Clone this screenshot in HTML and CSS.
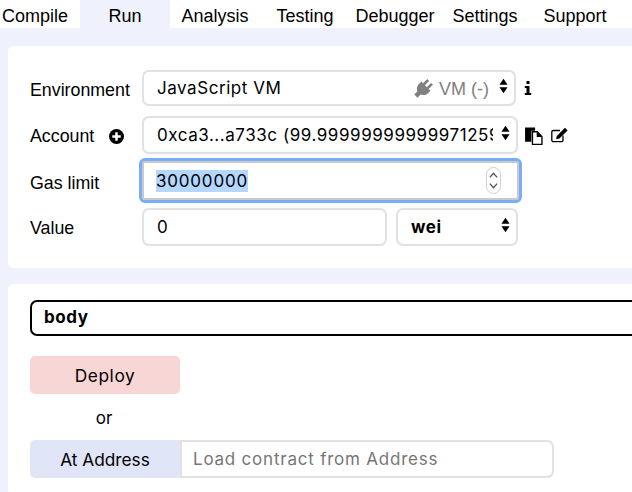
FILE: index.html
```html
<!DOCTYPE html>
<html lang="en">
  <head>
    <meta charset="UTF-8" />
    <title>Run</title>
    <link rel="stylesheet" href="styles.css">
  </head>
  <body>
    <nav class="tabs">
      <div class="tab tab-first">Compile</div>
      <div class="tab tab-active">Run</div>
      <div class="tab">Analysis</div>
      <div class="tab">Testing</div>
      <div class="tab">Debugger</div>
      <div class="tab">Settings</div>
      <div class="tab">Support</div>
    </nav>
    <main class="panel">
      <section class="card settings">
        <div class="row row-env">
          <div class="label">Environment</div>
          <div class="control select env-select">
            <span class="value">JavaScript VM</span>
            <span class="vm">
              <svg class="plug" viewBox="0 0 20 20"><g transform="rotate(45 10 10)"><path d="M6 0h2.600v6H6zM11.400 0H14v6h-2.600zM3.500 6h13v3c0 4-2.800 6-4.200 6.600V20H7.700v-4.400C6.300 15 3.500 13 3.500 9z"/></g></svg>
              VM (-)
            </span>
            <svg class="arrows" viewBox="0 0 10 16"><path d="M5 0l4.500 6.500h-9zM5 16L.5 9.500h9z"/></svg>
          </div>
          <svg class="info" viewBox="0 0 8 14"><path d="M2.500 0h3v3h-3zM.8 5h4.700v7h1.700v2H.8v-2h1.700V7H.8z"/></svg>
        </div>
        <div class="row row-account">
          <div class="label label-account">
            Account
            <svg class="plus" viewBox="0 0 16 16"><circle cx="8" cy="8" r="8"/><path d="M6.700 3.500h2.600v3.200h3.200v2.600H9.300v3.200H6.700V9.300H3.500V6.700h3.200z" fill="#fff"/></svg>
          </div>
          <div class="control select account-select">
            <span class="value value-clip">0xca3...a733c (99.99999999999971259</span>
            <svg class="arrows" viewBox="0 0 10 16"><path d="M5 0l4.500 6.500h-9zM5 16L.5 9.500h9z"/></svg>
          </div>
          <svg class="copy" viewBox="0 0 18 18"><path d="M1 1.500h9.500v3H7v10.500H1z"/><path d="M8 5.500h4.500l4.500 4.500v7.500H8z" fill="#fff" stroke="#000" stroke-width="1.300"/><path d="M12 5.500v5h5z"/></svg>
          <svg class="edit" viewBox="0 0 18 16"><path d="M12.500 8.500v4.700a1.500 1.500 0 0 1-1.500 1.500H2.800a1.500 1.500 0 0 1-1.500-1.500V5a1.500 1.500 0 0 1 1.500-1.500h6.700" fill="none" stroke="#000" stroke-width="1.300"/><path d="M14.500.8l2.600 2.600-8.200 8.200-3.300.7.700-3.300z"/></svg>
        </div>
        <div class="row row-gas">
          <div class="label">Gas limit</div>
          <div class="control gas-input">
            <span class="selected">30000000</span>
            <span class="spinner">
              <svg viewBox="0 0 10 24"><path d="M1.500 9L5 5l3.500 4M1.500 15L5 19l3.500-4" fill="none" stroke="#555" stroke-width="1.300"/></svg>
            </span>
          </div>
        </div>
        <div class="row row-value">
          <div class="label label-value">Value</div>
          <div class="control value-input"><span class="value">0</span></div>
          <div class="control select unit-select">
            <span class="value unit">wei</span>
            <svg class="arrows" viewBox="0 0 10 16"><path d="M5 0l4.500 6.500h-9zM5 16L.5 9.500h9z"/></svg>
          </div>
        </div>
      </section>
      <section class="card deploy">
        <div class="contract-select">body</div>
        <button class="btn btn-deploy">Deploy</button>
        <div class="or">or</div>
        <div class="address-row">
          <button class="btn btn-address">At Address</button>
          <div class="address-input">Load contract from Address</div>
        </div>
      </section>
    </main>
  </body>
</html>
```

FILE: styles.css
```css
/* Full-page layout */
html,
body {
  height: 100%;
  margin: 0;
  overflow: hidden;
  font-family: "Liberation Sans", Arial, sans-serif;
  font-size: 18px;
  color: #000;
  background-color: #fff;
}

/* Tabs */
.tabs {
  display: flex;
  height: 28px;
}

.tab {
  flex: 0 0 90px;
  text-align: center;
  line-height: 32px;
}

.tab-first {
  flex-basis: 70px;
  padding-right: 10px;
}

.tab-active {
  background-color: #eff1fc;
}

/* Panel with the two cards */
.panel {
  height: 464px;
  padding: 18px 0 0 8px;
  box-sizing: border-box;
  background-color: #eff1fc;
}

.card {
  background-color: #fff;
  border-radius: 5px 0 0 5px;
}

.settings {
  height: 222px;
  padding-top: 24px;
  box-sizing: border-box;
}

.deploy {
  height: 210px;
  margin-top: 16px;
  padding: 16px 0 0 22px;
  box-sizing: border-box;
}

/* Form rows */
.row {
  display: flex;
  align-items: center;
  padding-left: 22px;
}

.row-env {
  height: 36px;
}

.row-account {
  height: 38px;
  margin-top: 10px;
}

.row-gas {
  height: 39px;
  margin-top: 7px;
}

.row-value {
  height: 38px;
  margin-top: 8px;
}

.label {
  flex: 0 0 112px;
  padding-top: 5px;
  font-size: 17.8px;
}

.label-account {
  display: flex;
  align-items: center;
  padding-top: 3px;
}

.label-value {
  padding-top: 3px;
}

.plus {
  width: 15px;
  height: 15px;
  margin-left: 15px;
}

.control {
  display: flex;
  align-items: center;
  height: 100%;
  box-sizing: border-box;
  border: 2px solid #e1e1e1;
  border-radius: 7px;
  background-color: #fff;
  padding-left: 13px;
  font-family: Inter, "Liberation Sans", sans-serif;
  font-size: 17px;
  letter-spacing: 0.55px;
}

.select {
  justify-content: space-between;
  padding-right: 6px;
}

.value {
  white-space: nowrap;
}

.value-clip {
  width: 336px;
  overflow: hidden;
}

.arrows {
  flex: none;
  width: 9px;
  height: 16px;
  margin-bottom: 4px;
}

.env-select {
  width: 374px;
}

.account-select {
  width: 376px;
}

.vm {
  display: flex;
  align-items: center;
  margin-left: auto;
  margin-right: 10px;
  padding-top: 2px;
  font-family: "Liberation Sans", sans-serif;
  font-size: 18px;
  letter-spacing: 0;
  color: #808080;
}

.plug {
  width: 20px;
  height: 20px;
  margin-right: 6px;
  fill: #808080;
}

.info {
  width: 8px;
  height: 14px;
  margin-left: 8px;
}

.copy {
  width: 19px;
  height: 19px;
  margin-left: 6px;
}

.edit {
  width: 19px;
  height: 16px;
  margin-left: 7px;
}

/* Focused number input */
.gas-input {
  justify-content: space-between;
  width: 377px;
  border-color: #c9c9c9;
  outline: 3px solid #78aef5;
  border-radius: 3px;
  padding-left: 12px;
  padding-right: 16px;
  letter-spacing: 0.8px;
}

.selected {
  background-color: #b3d7ff;
  line-height: 22px;
}

.spinner {
  display: flex;
  width: 15px;
  height: 27px;
  box-sizing: border-box;
  border: 1px solid #d0d0d0;
  border-radius: 8px;
}

.spinner svg {
  width: 100%;
  height: 100%;
}

.value-input {
  width: 245px;
}

.unit-select {
  width: 122px;
  margin-left: 9px;
}

.unit {
  font-weight: 700;
}

/* Deploy card */
.contract-select {
  height: 36px;
  box-sizing: border-box;
  border: 2px solid #000;
  border-right: 0;
  border-radius: 7px 0 0 7px;
  padding-left: 12px;
  font-family: Inter, "Liberation Sans", sans-serif;
  font-size: 17px;
  font-weight: 700;
  letter-spacing: 0.6px;
  line-height: 31px;
}

.btn {
  display: block;
  width: 150px;
  height: 38px;
  border: 0;
  padding: 0;
  font-family: Inter, "Liberation Sans", sans-serif;
  font-size: 17.3px;
  color: #000;
}

.btn-deploy {
  margin-top: 20px;
  border-radius: 5px;
  background-color: #f9d6d6;
  letter-spacing: 0.6px;
}

.or {
  width: 148px;
  height: 46px;
  line-height: 48px;
  text-align: center;
  font-size: 17px;
  font-family: Inter, "Liberation Sans", sans-serif;
}

.address-row {
  display: flex;
}

.btn-address {
  border-radius: 5px 0 0 5px;
  background-color: #e1e5f8;
}

.address-input {
  width: 374px;
  height: 38px;
  box-sizing: border-box;
  border: 2px solid #e1e1e1;
  border-radius: 0 7px 7px 0;
  padding-left: 11px;
  font-family: Inter, "Liberation Sans", sans-serif;
  font-size: 17px;
  letter-spacing: 0.78px;
  line-height: 35px;
  color: #767676;
}
```
